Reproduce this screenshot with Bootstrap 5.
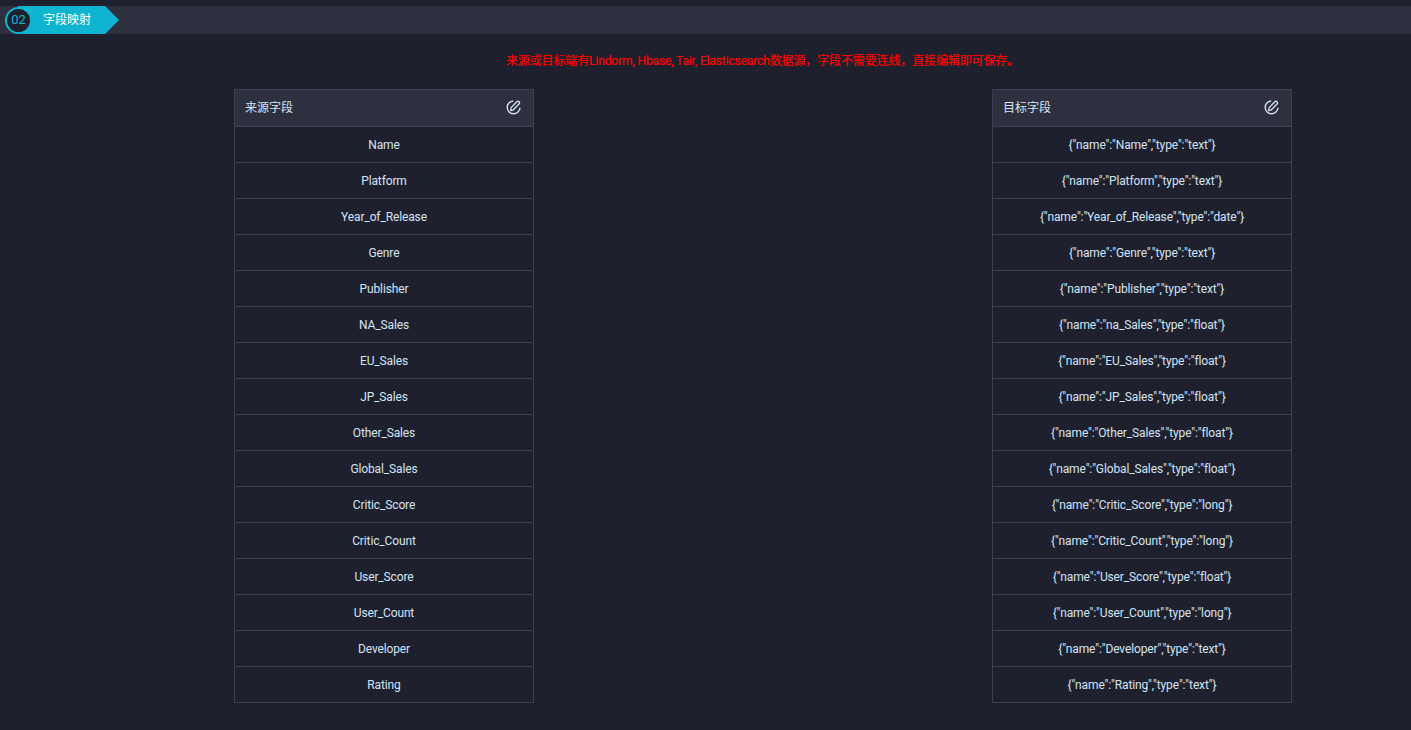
<!doctype html>
<html lang="zh"><head><meta charset="utf-8"><title>字段映射</title>
<link href="https://cdn.jsdelivr.net/npm/bootstrap@5.3.0/dist/css/bootstrap.min.css" rel="stylesheet">
<style>
html,body{background:#1e202d;height:730px;overflow:hidden}
body{font-family:Roboto,"Noto Sans CJK SC",sans-serif;font-size:12px;color:#d3e4f5;line-height:18px;letter-spacing:-.13px}
.stepbar{margin-top:6px;height:28px;background:#2e3040}
.stepnum{width:27px;height:27px;border:2px solid #0fb4d1;border-radius:50%;background:#1e202d;color:#0fb4d1;font-size:13px;letter-spacing:0;margin-left:5px;z-index:1}
.steptitle{height:28px;margin-left:-14px;padding-left:25px;width:101px;background:#0fb4d1;color:#fff;letter-spacing:0;clip-path:polygon(0 0,87px 0,101px 50%,87px 100%,0 100%)}
.notice{color:#f00;text-align:center;margin:18px 0 19px;height:18px;padding-left:234px;padding-right:120px;-webkit-text-stroke:.2px #f00}
.mapwrap{padding-left:234px;gap:458px}
.fieldtable{width:300px;border:1px solid #3c3f52;border-bottom:0}
.fieldhead{height:37px;background:#2e3040;padding:0 12px 0 10px;border-bottom:1px solid #3c3f52;letter-spacing:0}
.headicon{margin-bottom:1px}
.fieldrow{height:36px;border-bottom:1px solid #3c3f52}
</style></head>
<body>
<div class="stepbar d-flex align-items-center">
  <div class="stepnum d-flex align-items-center justify-content-center flex-shrink-0">02</div>
  <div class="steptitle d-flex align-items-center flex-shrink-0">字段映射</div>
</div>
<div class="notice">来源或目标端有Lindorm, Hbase, Tair, Elasticsearch数据源，字段不需要连线，直接编辑即可保存。</div>
<div class="mapwrap d-flex align-items-start" id="wrap"></div>
<script>
const names=["Name:text","Platform:text","Year_of_Release:date","Genre:text","Publisher:text","NA_Sales:float","EU_Sales:float","JP_Sales:float","Other_Sales:float","Global_Sales:float","Critic_Score:long","Critic_Count:long","User_Score:float","User_Count:long","Developer:text","Rating:text"].map(s=>s.split(":"));
const icon='<svg class="headicon" width="15" height="15" viewBox="0 0 15 15" fill="none" stroke="#d3e4f5"><path d="M7.2 1A6.4 6.4 0 1 0 14 7.8" stroke-width="1.4"/><path d="M4.6 10.6 5.2 7.6 10.8 1.8a1.4 1.4 0 0 1 2.2 2.2L7.4 9.8Z" stroke-width="1.3" stroke-linejoin="round"/></svg>';
const table=(title,rows)=>`<div class="fieldtable"><div class="fieldhead d-flex align-items-center justify-content-between"><span>${title}</span>${icon}</div>${rows.map(r=>`<div class="fieldrow d-flex align-items-center justify-content-center">${r}</div>`).join("")}</div>`;
document.getElementById("wrap").innerHTML=table("来源字段",names.map(n=>n[0]))+table("目标字段",names.map(([n,t])=>`{"name":"${n==="NA_Sales"?"na_Sales":n}","type":"${t}"}`));
</script>
<script src="https://cdn.jsdelivr.net/npm/bootstrap@5.3.0/dist/js/bootstrap.bundle.min.js"></script>
</body></html>
